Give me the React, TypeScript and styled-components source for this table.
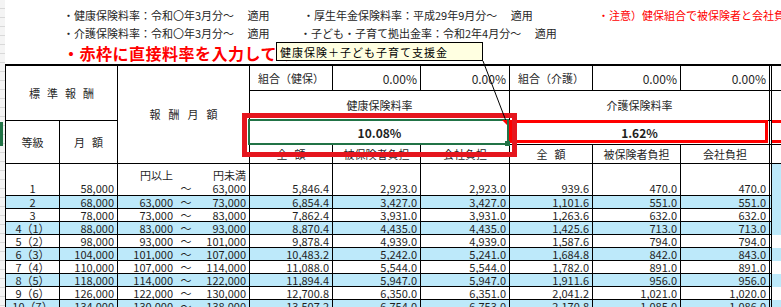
import React from 'react'
import styled, { createGlobalStyle } from 'styled-components'

const GlobalStyle = createGlobalStyle`
	html, body {
		margin: 0;
		padding: 0;
		background: #fff;
		overflow: hidden;
	}
	body {
		font-family: "Noto Sans CJK JP", "Noto Sans", sans-serif;
		color: #1f1f1f;
	}
`

const TINT = '#bde9fa'
const LINE = '#000'

const Page = styled.div`
	position: relative;
	display: flex;
	width: 781px;
	height: 307px;
	overflow: hidden;
`

const RowEdge = styled.div`
	flex: none;
	width: 5px;
	display: flex;
	flex-direction: column;
	background: repeating-linear-gradient(to bottom, #f4f4f4 0 8px, #d9d9d9 8px 9px);
`

const ActiveRowMark = styled.div`
	margin-top: 122px;
	width: 3px;
	height: 24px;
	background: #217346;
`

const Workbook = styled.div`
	flex: none;
	display: flex;
	flex-direction: column;
`

const Notes = styled.div`
	box-sizing: border-box;
	height: 65px;
	padding: 6px 0 0 58px;
	font-size: 11px;
	white-space: nowrap;
`

const NoteRow = styled.div`
	display: grid;
	grid-template-columns: 237px 298px auto;
	height: 18px;
	align-items: center;
`

const Note = styled.span<{ $warn?: boolean; $indent?: number }>`
	padding-left: ${p => p.$indent ?? 0}px;
	color: ${p => (p.$warn ? '#ff0000' : '#262626')};
`

const Alert = styled.div`
	height: 22px;
	line-height: 22px;
	font-size: 16px;
	font-weight: 700;
	letter-spacing: 0.5px;
	color: #ff0000;
`

const Sheet = styled.div`
	position: relative;
	display: grid;
	grid-template-columns: 54px 58px 132px 83px 88px 89px 83px 88px 91px 40px;
	grid-template-rows: 25px 30px 24px 19px 32px repeat(9, 13px);
	border-top: 2px solid ${LINE};
	border-left: 1px solid ${LINE};
	font-size: 11px;
	line-height: 13px;
`

type Align = 'left' | 'center' | 'right'

const Cell = styled.div<{
	$c: string
	$r: string
	$align?: Align
	$bottom?: boolean
	$tint?: boolean
	$double?: boolean
	$open?: boolean
	$flat?: boolean
	$size?: number
}>`
	grid-column: ${p => p.$c};
	grid-row: ${p => p.$r};
	box-sizing: border-box;
	display: flex;
	align-items: ${p => (p.$bottom ? 'flex-end' : 'center')};
	justify-content: ${p =>
		p.$align === 'right' ? 'flex-end' : p.$align === 'left' ? 'flex-start' : 'center'};
	padding: 0 3px 0 3px;
	font-size: ${p => p.$size ?? 11}px;
	background: ${p => (p.$tint ? TINT : '#fff')};
	border-right: ${p => (p.$double ? `3px double ${LINE}` : p.$open ? 'none' : `1px solid ${LINE}`)};
	border-bottom: ${p => (p.$flat ? 'none' : `1px solid ${LINE}`)};
	white-space: nowrap;
	overflow: hidden;
`

const Spaced = styled.span<{ $gap: number }>`
	letter-spacing: ${p => p.$gap}px;
	margin-right: -${p => p.$gap}px;
`

const Strong = styled.span`
	font-size: 12px;
	font-weight: 700;
`

const ActiveCell = styled(Cell)`
	position: relative;
	overflow: visible;

	&::after {
		content: '';
		position: absolute;
		top: -2px;
		left: -2px;
		right: 0;
		bottom: -1px;
		border: 2px solid #217346;
	}
`

const FillHandle = styled.span`
	position: absolute;
	right: -1px;
	bottom: -2px;
	width: 5px;
	height: 5px;
	background: #217346;
	z-index: 1;
`

const NoteMark = styled.span`
	position: absolute;
	top: -1px;
	right: 2px;
	width: 0;
	height: 0;
	border-left: 5px solid transparent;
	border-top: 5px solid #ff0000;
	z-index: 1;
`

const FramedCell = styled(Cell)<{ $band?: boolean }>`
	position: relative;
	overflow: visible;

	&::after {
		content: '';
		position: absolute;
		top: -1px;
		bottom: 1px;
		left: ${p => (p.$band ? 0 : -1)}px;
		right: ${p => (p.$band ? 0 : 1)}px;
		border: 3px solid #ff0000;
		border-left-width: ${p => (p.$band ? 0 : 3)}px;
		border-right-width: ${p => (p.$band ? 0 : 3)}px;
	}
`

const RangeCell = styled(Cell)`
	flex-direction: column;
	align-items: stretch;
	justify-content: ${p => (p.$bottom ? 'flex-end' : 'center')};
	padding: 0;
`

const RangeLine = styled.div`
	display: grid;
	grid-template-columns: 58px 20px 1fr;
`

const RangeNum = styled.span`
	text-align: right;
	padding-right: 3px;
`

const Wave = styled.span`
	text-align: center;
`

const InputFrame = styled.div`
	position: absolute;
	left: 236px;
	top: 47px;
	width: 275px;
	height: 44px;
	box-sizing: border-box;
	border: 5px solid #e5161e;
	pointer-events: none;
`

const Comment = styled.div`
	position: absolute;
	left: 276px;
	top: 42px;
	width: 207px;
	height: 19px;
	box-sizing: border-box;
	padding: 0 0 0 3px;
	display: flex;
	align-items: center;
	background: #ffffe1;
	border: 1px solid #000;
	font-size: 11px;
	letter-spacing: 1px;
	color: #000;
	white-space: nowrap;
`

const Leader = styled.svg`
	position: absolute;
	left: 0;
	top: 0;
	pointer-events: none;
`

const rows: string[][] = [
	['1', '58,000', '', '63,000', '5,846.4', '2,923.0', '2,923.0', '939.6', '470.0', '470.0'],
	['2', '68,000', '63,000', '73,000', '6,854.4', '3,427.0', '3,427.0', '1,101.6', '551.0', '551.0'],
	['3', '78,000', '73,000', '83,000', '7,862.4', '3,931.0', '3,931.0', '1,263.6', '632.0', '632.0'],
	['4（1）', '88,000', '83,000', '93,000', '8,870.4', '4,435.0', '4,435.0', '1,425.6', '713.0', '713.0'],
	['5（2）', '98,000', '93,000', '101,000', '9,878.4', '4,939.0', '4,939.0', '1,587.6', '794.0', '794.0'],
	['6（3）', '104,000', '101,000', '107,000', '10,483.2', '5,242.0', '5,241.0', '1,684.8', '842.0', '843.0'],
	['7（4）', '110,000', '107,000', '114,000', '11,088.0', '5,544.0', '5,544.0', '1,782.0', '891.0', '891.0'],
	['8（5）', '118,000', '114,000', '122,000', '11,894.4', '5,947.0', '5,947.0', '1,911.6', '956.0', '956.0'],
	['9（6）', '126,000', '122,000', '130,000', '12,700.8', '6,350.0', '6,351.0', '2,041.2', '1,021.0', '1,020.0'],
	['10（7）', '134,000', '130,000', '138,000', '13,507.2', '6,754.0', '6,753.0', '2,170.8', '1,085.0', '1,086.0'],
]

const RateHeader = ({ from, label, union, rate, framed }: {
	from: number
	label: string
	union: string
	rate: string
	framed?: boolean
}) => {
	const span = `${from} / ${from + 3}`
	const last = from + 2
	return (
		<>
			<Cell $c={`${from}`} $r="1">{union}</Cell>
			<Cell $c={`${from + 1}`} $r="1" $align="right" $size={12}>0.00%</Cell>
			<Cell $c={`${last}`} $r="1" $align="right" $size={12} $double={last === 9}>0.00%</Cell>
			<Cell $c={span} $r="2" $double={last === 9}>{label}</Cell>
			{framed ? (
				<FramedCell $c={span} $r="3" $double>
					<Strong>{rate}</Strong>
				</FramedCell>
			) : (
				<ActiveCell $c={span} $r="3">
					<Strong>{rate}</Strong>
					<NoteMark />
					<FillHandle />
				</ActiveCell>
			)}
			<Cell $c={`${from}`} $r="4"><Spaced $gap={7}>全額</Spaced></Cell>
			<Cell $c={`${from + 1}`} $r="4">被保険者負担</Cell>
			<Cell $c={`${last}`} $r="4" $double={last === 9}>会社負担</Cell>
		</>
	)
}

const DataRow = ({ cells, index }: { cells: string[]; index: number }) => {
	const r = `${5 + index}`
	const tint = index % 2 === 1
	const first = index === 0
	const [grade, monthly, low, high, ...amounts] = cells
	return (
		<>
			<Cell $c="1" $r={r} $tint={tint} $bottom={first}>{grade}</Cell>
			<Cell $c="2" $r={r} $tint={tint} $bottom={first} $align="right">{monthly}</Cell>
			<RangeCell $c="3" $r={r} $tint={tint} $bottom={first}>
				{first && (
					<RangeLine>
						<RangeNum>円以上</RangeNum>
						<Wave />
						<RangeNum>円未満</RangeNum>
					</RangeLine>
				)}
				<RangeLine>
					<RangeNum>{low}</RangeNum>
					<Wave>～</Wave>
					<RangeNum>{high}</RangeNum>
				</RangeLine>
			</RangeCell>
			{amounts.map((v, i) => (
				<Cell
					key={i}
					$c={`${4 + i}`}
					$r={r}
					$tint={tint}
					$bottom={first}
					$align="right"
					$double={i === 5}
				>
					{v}
				</Cell>
			))}
			{index >= 4 && <Cell $c="10" $r={r} $tint={tint} $open $flat />}
		</>
	)
}

export default function App() {
	return (
		<Page>
			<GlobalStyle />
			<RowEdge>
				<ActiveRowMark />
			</RowEdge>
			<Workbook>
				<Notes>
					<NoteRow>
						<Note>・健康保険料率：令和〇年3月分～　 適用</Note>
						<Note $indent={3}>・厚生年金保険料率：平成29年9月分～　 適用</Note>
						<Note $warn>・注意）健保組合で被保険者と会社負担割合が異なる場合</Note>
					</NoteRow>
					<NoteRow>
						<Note>・介護保険料率：令和〇年3月分～　 適用</Note>
						<Note>・子ども・子育て拠出金率：令和2年4月分～　 適用</Note>
					</NoteRow>
					<Alert>・赤枠に直接料率を入力してください</Alert>
				</Notes>
				<Sheet>
					<Cell $c="1 / 3" $r="1 / 3"><Spaced $gap={7}>標準報酬</Spaced></Cell>
					<Cell $c="3" $r="1 / 5"><Spaced $gap={8}>報酬月額</Spaced></Cell>
					<Cell $c="1" $r="3 / 5">等級</Cell>
					<Cell $c="2" $r="3 / 5"><Spaced $gap={7}>月額</Spaced></Cell>
					<RateHeader from={4} union="組合（健保）" label="健康保険料率" rate="10.08%" />
					<RateHeader from={7} union="組合（介護）" label="介護保険料率" rate="1.62%" framed />
					<Cell $c="10" $r="1" $open />
					<Cell $c="10" $r="2" $open $flat />
					<FramedCell $c="10" $r="3" $open $band />
					<Cell $c="10" $r="4" $open />
					<Cell $c="10" $r="5 / 9" $tint $open $flat />
					{rows.map((cells, i) => (
						<DataRow key={i} cells={cells} index={i} />
					))}
					<InputFrame />
				</Sheet>
			</Workbook>
			<Leader width="781" height="307">
				<line x1="483" y1="61" x2="506" y2="121" stroke="#000" strokeWidth="1" />
			</Leader>
			<Comment>健康保険＋子ども子育て支援金</Comment>
		</Page>
	)
}
